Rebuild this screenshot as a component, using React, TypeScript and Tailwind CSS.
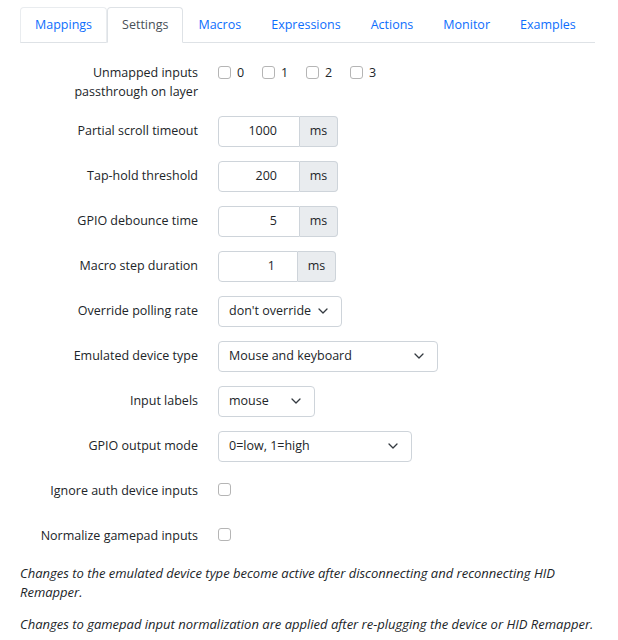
import React from "react";

const tabs = ["Mappings", "Settings", "Macros", "Expressions", "Actions", "Monitor", "Examples"];

function Chevron() {
  return (
    <svg width="10" height="6" viewBox="0 0 10 6" fill="none" className="shrink-0">
      <path d="M1 1l4 4 4-4" stroke="#343a40" strokeWidth="1.3" strokeLinecap="round" strokeLinejoin="round" />
    </svg>
  );
}

function Box() {
  return <span className="inline-block w-[13px] h-[13px] rounded-[3px] border border-[#b5b5b5] bg-white shrink-0" />;
}

function Row({ label, children, top }: { label: React.ReactNode; children: React.ReactNode; top?: boolean }) {
  return (
    <div className={`flex ${top ? "items-start" : "items-center"} min-h-[31px]`}>
      <div className="w-[178px] text-right shrink-0">{label}</div>
      <div className="ml-[20px] flex items-center">{children}</div>
    </div>
  );
}

function NumInput({ value, w }: { value: string; w: string }) {
  return (
    <div className="flex h-[31px]">
      <div className={`${w} border border-[#ced4da] rounded-l-[4px] flex items-center justify-end pr-[22px]`}>{value}</div>
      <div className="w-[38px] border border-l-0 border-[#ced4da] bg-[#e9ecef] rounded-r-[4px] flex items-center justify-center">ms</div>
    </div>
  );
}

function Select({ value, w }: { value: string; w: string }) {
  return (
    <div className={`${w} h-[31px] border border-[#ced4da] rounded-[4px] flex items-center justify-between pl-[10px] pr-[13px]`}>
      <span>{value}</span>
      <Chevron />
    </div>
  );
}

export default function App() {
  return (
    <div className="bg-white text-[#212529] text-[12.5px] leading-[19.5px] px-[20px] pt-[7px] pb-4 min-h-[640px]" style={{ fontFamily: '"Open Sans", "Noto Sans", sans-serif' }}>
      <nav className="flex w-[575px] border-b border-[#dee2e6]">
        {tabs.map((t) => {
          const active = t === "Settings";
          const hover = t === "Mappings";
          return (
            <div
              key={t}
              className={`-mb-px px-[14px] pt-[7px] pb-[7px] rounded-t-[4px] border ${
                active
                  ? "border-[#dee2e6] border-b-white bg-white text-[#495057]"
                  : hover
                  ? "border-[#e9ecef] border-b-[#dee2e6] text-[#0d6efd]"
                  : "border-transparent text-[#0d6efd]"
              }`}
            >
              {t}
            </div>
          );
        })}
      </nav>

      <div className="mt-[20px] flex flex-col">
        <Row label={<>Unmapped inputs<br />passthrough on layer</>} top>
          <div className="flex items-center">
            {["0", "1", "2", "3"].map((n) => (
              <div key={n} className="w-[44px] flex items-center gap-[6px]">
                <Box />
                <span>{n}</span>
              </div>
            ))}
          </div>
        </Row>
        <div className="h-[14px]" />
        <div className="flex flex-col gap-[14px]">
          <Row label="Partial scroll timeout"><NumInput value="1000" w="w-[82px]" /></Row>
          <Row label="Tap-hold threshold"><NumInput value="200" w="w-[82px]" /></Row>
          <Row label="GPIO debounce time"><NumInput value="5" w="w-[82px]" /></Row>
          <Row label="Macro step duration"><NumInput value="1" w="w-[80px]" /></Row>
          <Row label="Override polling rate"><Select value="don't override" w="w-[124px]" /></Row>
          <Row label="Emulated device type"><Select value="Mouse and keyboard" w="w-[220px]" /></Row>
          <Row label="Input labels"><Select value="mouse" w="w-[97px]" /></Row>
          <Row label="GPIO output mode"><Select value="0=low, 1=high" w="w-[194px]" /></Row>
          <Row label="Ignore auth device inputs"><span className="-mt-[3px] flex"><Box /></span></Row>
          <Row label="Normalize gamepad inputs"><span className="-mt-[3px] flex"><Box /></span></Row>
        </div>
      </div>

      <div className="mt-[12px] w-[580px] italic text-[13px]">
        <p>Changes to the emulated device type become active after disconnecting and reconnecting HID Remapper.</p>
        <p className="mt-[12px]">Changes to gamepad input normalization are applied after re-plugging the device or HID Remapper.</p>
      </div>
    </div>
  );
}
